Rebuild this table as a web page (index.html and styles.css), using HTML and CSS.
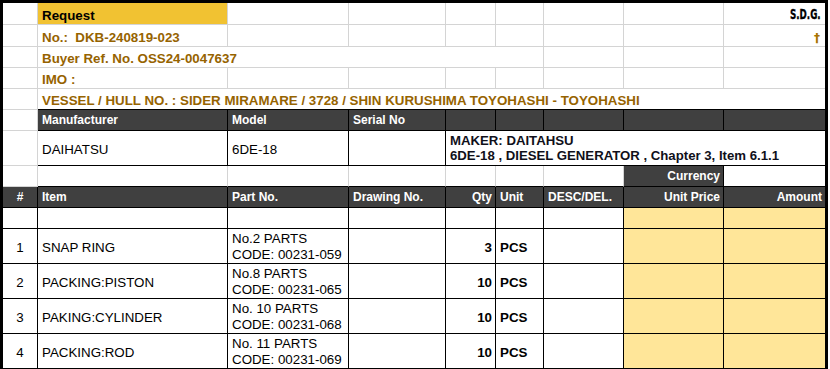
FILE: index.html
```html
<!DOCTYPE html>
<html lang="en">
<head>
<meta charset="utf-8">
<title>Request DKB-240819-023</title>
<link rel="stylesheet" href="styles.css">
</head>
<body>
<div class="sheet">
  <!-- row 1 -->
  <div class="c"></div>
  <div class="c req">Request</div>
  <div class="c"></div><div class="c"></div><div class="c"></div><div class="c"></div><div class="c"></div><div class="c"></div>
  <div class="c e r sdg"><span class="sdg-t">S.D.G.</span></div>
  <!-- row 2 -->
  <div class="c"></div>
  <div class="c gold">No.:&nbsp; DKB-240819-023</div>
  <div class="c"></div><div class="c"></div><div class="c"></div><div class="c"></div><div class="c"></div><div class="c"></div>
  <div class="c e r cross">&#8224;</div>
  <!-- row 3 -->
  <div class="c"></div>
  <div class="c gold s5">Buyer Ref. No. OSS24-0047637</div>
  <div class="c"></div><div class="c"></div>
  <div class="c e"></div>
  <!-- row 4 -->
  <div class="c"></div>
  <div class="c gold">IMO :</div>
  <div class="c"></div><div class="c"></div><div class="c"></div><div class="c"></div><div class="c"></div><div class="c"></div>
  <div class="c e"></div>
  <!-- row 5 -->
  <div class="c"></div>
  <div class="c gold s8 e dk-b">VESSEL / HULL NO. : SIDER MIRAMARE / 3728 / SHIN KURUSHIMA TOYOHASHI - TOYOHASHI</div>
  <!-- row 6 -->
  <div class="c"></div>
  <div class="c h">Manufacturer</div>
  <div class="c h">Model</div>
  <div class="c h">Serial No</div>
  <div class="c h"></div><div class="c h"></div><div class="c h"></div><div class="c h"></div>
  <div class="c h e"></div>
  <!-- row 7 -->
  <div class="c"></div>
  <div class="c k mid">DAIHATSU</div>
  <div class="c k mid">6DE-18</div>
  <div class="c k"></div>
  <div class="c k s5 e maker">
    <div>MAKER: DAITAHSU</div>
    <div>6DE-18 , DIESEL GENERATOR , Chapter 3, Item 6.1.1</div>
  </div>
  <!-- row 8 -->
  <div class="c"></div>
  <div class="c dk-b"></div><div class="c dk-b"></div><div class="c dk-b"></div><div class="c dk-b"></div><div class="c dk-b"></div><div class="c dk-b"></div>
  <div class="c h r">Currency</div>
  <div class="c k e"></div>
  <!-- row 9 -->
  <div class="c h ctr">#</div>
  <div class="c h">Item</div>
  <div class="c h">Part No.</div>
  <div class="c h">Drawing No.</div>
  <div class="c h r">Qty</div>
  <div class="c h">Unit</div>
  <div class="c h">DESC/DEL.</div>
  <div class="c h r">Unit Price</div>
  <div class="c h r e">Amount</div>
  <!-- row 10 -->
  <div class="c k"></div><div class="c k"></div><div class="c k"></div><div class="c k"></div><div class="c k"></div><div class="c k"></div><div class="c k"></div>
  <div class="c k y"></div><div class="c k y e"></div>
  <!-- items -->
  <div class="c k mid ctr">1</div>
  <div class="c k mid">SNAP RING</div>
  <div class="c k part"><div>No.2 PARTS</div><div>CODE: 00231-059</div></div>
  <div class="c k"></div>
  <div class="c k mid r b">3</div>
  <div class="c k mid b">PCS</div>
  <div class="c k"></div>
  <div class="c k y"></div><div class="c k y e"></div>

  <div class="c k mid ctr">2</div>
  <div class="c k mid">PACKING:PISTON</div>
  <div class="c k part"><div>No.8 PARTS</div><div>CODE: 00231-065</div></div>
  <div class="c k"></div>
  <div class="c k mid r b">10</div>
  <div class="c k mid b">PCS</div>
  <div class="c k"></div>
  <div class="c k y"></div><div class="c k y e"></div>

  <div class="c k mid ctr">3</div>
  <div class="c k mid">PAKING:CYLINDER</div>
  <div class="c k part"><div>No. 10 PARTS</div><div>CODE: 00231-068</div></div>
  <div class="c k"></div>
  <div class="c k mid r b">10</div>
  <div class="c k mid b">PCS</div>
  <div class="c k"></div>
  <div class="c k y"></div><div class="c k y e"></div>

  <div class="c k mid ctr">4</div>
  <div class="c k mid">PACKING:ROD</div>
  <div class="c k part"><div>No. 11 PARTS</div><div>CODE: 00231-069</div></div>
  <div class="c k"></div>
  <div class="c k mid r b">10</div>
  <div class="c k mid b">PCS</div>
  <div class="c k"></div>
  <div class="c k y"></div><div class="c k y e"></div>
</div>
</body>
</html>
```
FILE: styles.css
```css
html, body {
  margin: 0;
  padding: 0;
  background: #fff;
}

.sheet {
  display: grid;
  grid-template-columns: 35px 190px 121px 97px 50px 48px 80px 100px 101px;
  grid-template-rows: 22px 22px 21px 21px 21px 21px 35px 21px 21px 21px 35px 35px 35px 35px;
  width: 822px;
  border: 3px solid #000;
  border-bottom: 0;
  font-family: "Liberation Sans", Arial, sans-serif;
  font-size: 13.33px;
  color: #000;
  overflow: hidden;
}

.c {
  box-sizing: border-box;
  border-right: 1px solid #d4d4d4;
  border-bottom: 1px solid #d4d4d4;
  display: flex;
  align-items: flex-end;
  padding: 0 3px 1px 4px;
  line-height: 15px;
  white-space: nowrap;
  min-width: 0;
}

.e { border-right: 0; }
.s5 { grid-column: span 5; }
.s8 { grid-column: span 8; }

.req {
  background: #f1c232;
  font-weight: bold;
}

.gold {
  color: #966300;
  font-weight: bold;
}

.dk-b { border-bottom-color: #000; }

.sdg {
  padding-bottom: 3px;
  padding-right: 4px;
}

.sdg-t {
  display: inline-block;
  font-family: "DejaVu Sans Condensed", "DejaVu Sans", sans-serif;
  font-weight: bold;
  font-size: 13.5px;
  line-height: 14px;
  transform: scaleX(0.72);
  transform-origin: right center;
  -webkit-text-stroke: 0.3px #000;
}

.cross {
  color: #a87400;
  font-family: "DejaVu Sans", sans-serif;
  font-weight: bold;
  font-size: 12px;
  padding-right: 5px;
  padding-bottom: 0;
}

.h {
  background: #404040;
  color: #fff;
  font-weight: bold;
  font-size: 12px;
  border-color: #000;
  align-items: center;
  padding-bottom: 0;
  padding-top: 1px;
}

.k { border-color: #000; }
.y { background: #ffe699; }
.mid { align-items: center; padding-bottom: 0; padding-top: 2px; }
.r { justify-content: flex-end; }
.ctr { justify-content: center; padding-left: 0; padding-right: 0; }
.b { font-weight: bold; }

.maker {
  flex-direction: column;
  align-items: flex-start;
  justify-content: center;
  font-weight: bold;
  font-size: 13.2px;
  color: #10101a;
  padding-bottom: 0;
}

.part {
  flex-direction: column;
  align-items: flex-start;
  justify-content: center;
  line-height: 16px;
  padding-bottom: 0;
  padding-top: 2px;
}
```
